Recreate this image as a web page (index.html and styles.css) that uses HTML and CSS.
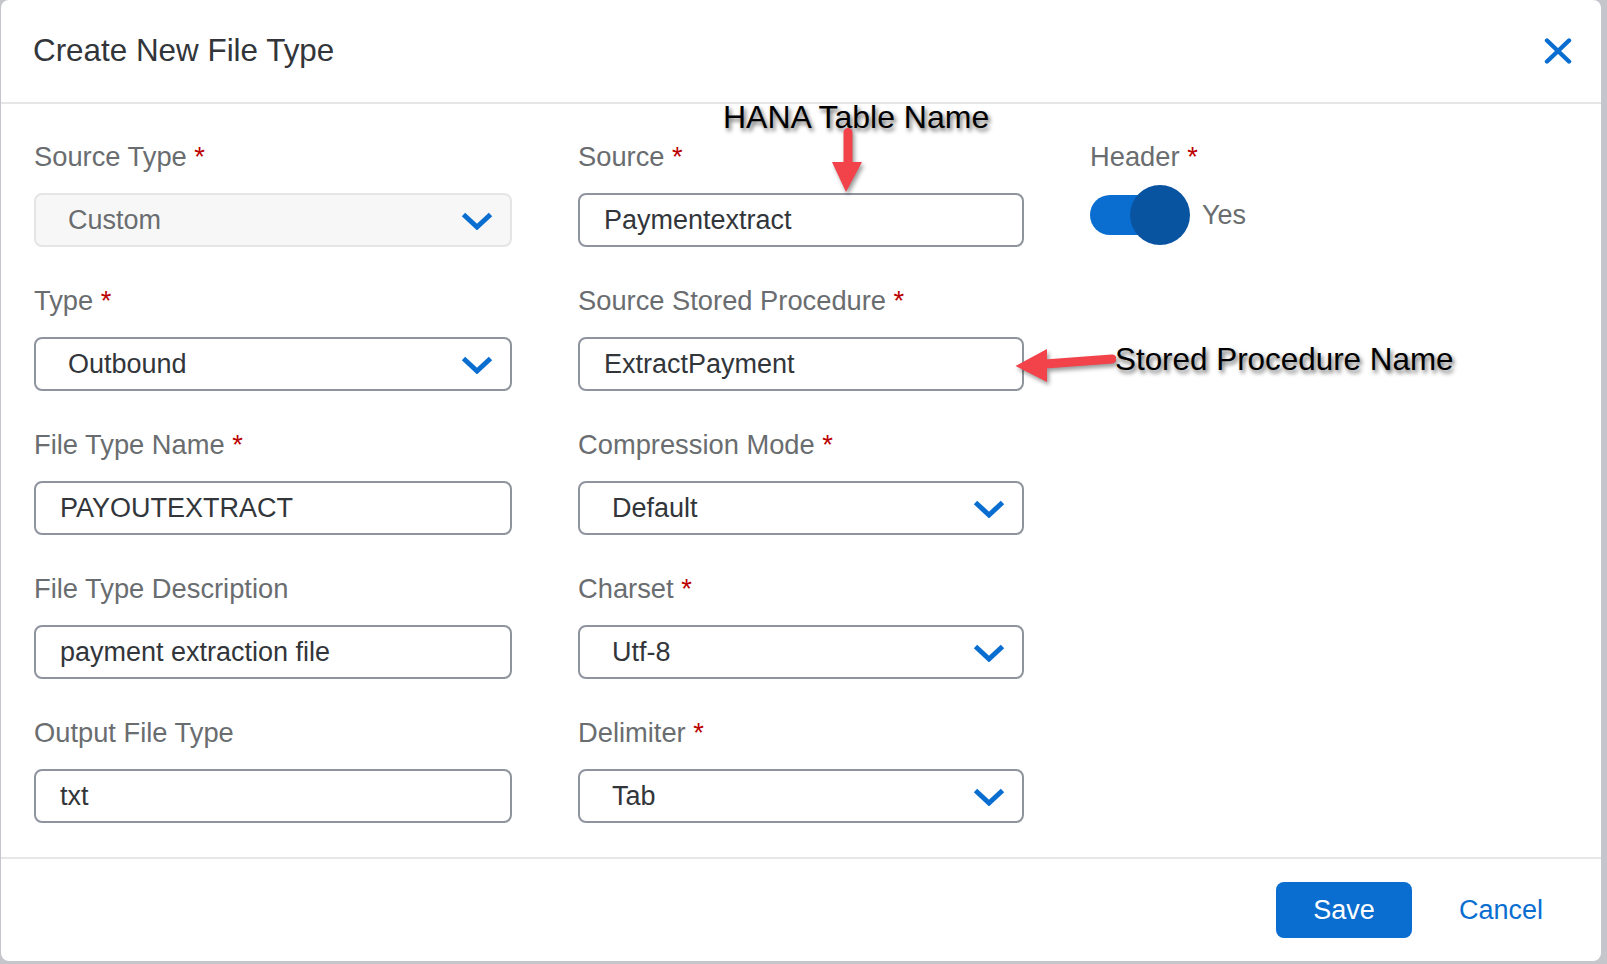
FILE: index.html
```html
<!DOCTYPE html>
<html lang="en">
<head>
<meta charset="utf-8">
<title>Create New File Type</title>
<link rel="stylesheet" href="styles.css">
</head>
<body>
<div class="dialog">
  <header class="dlg-header">
    <h1 class="title">Create New File Type</h1>
    <button class="close" aria-label="Close">
      <svg width="28" height="26" viewBox="0 0 28 26"><path d="M3 2.5 L25 23.5 M25 2.5 L3 23.5" stroke="#0a6ed1" stroke-width="4.4" stroke-linecap="round" fill="none"/></svg>
    </button>
  </header>

  <main class="dlg-body">
    <div class="form-grid">
      <div class="col">
        <div class="field">
          <div class="label">Source Type <span class="req">*</span></div>
          <div class="control select disabled"><span>Custom</span><svg class="chev" width="32" height="18" viewBox="0 0 32 18"><path d="M2.5 2.5 L16 15 L29.5 2.5" stroke="#0a6ed1" stroke-width="5" fill="none"/></svg></div>
        </div>
        <div class="field">
          <div class="label">Type <span class="req">*</span></div>
          <div class="control select"><span>Outbound</span><svg class="chev" width="32" height="18" viewBox="0 0 32 18"><path d="M2.5 2.5 L16 15 L29.5 2.5" stroke="#0a6ed1" stroke-width="5" fill="none"/></svg></div>
        </div>
        <div class="field">
          <div class="label">File Type Name <span class="req">*</span></div>
          <div class="control input">PAYOUTEXTRACT</div>
        </div>
        <div class="field">
          <div class="label">File Type Description</div>
          <div class="control input">payment extraction file</div>
        </div>
        <div class="field">
          <div class="label">Output File Type</div>
          <div class="control input">txt</div>
        </div>
      </div>

      <div class="col">
        <div class="field">
          <div class="label">Source <span class="req">*</span></div>
          <div class="control input">Paymentextract</div>
        </div>
        <div class="field">
          <div class="label">Source Stored Procedure <span class="req">*</span></div>
          <div class="control input">ExtractPayment</div>
        </div>
        <div class="field">
          <div class="label">Compression Mode <span class="req">*</span></div>
          <div class="control select"><span>Default</span><svg class="chev" width="32" height="18" viewBox="0 0 32 18"><path d="M2.5 2.5 L16 15 L29.5 2.5" stroke="#0a6ed1" stroke-width="5" fill="none"/></svg></div>
        </div>
        <div class="field">
          <div class="label">Charset <span class="req">*</span></div>
          <div class="control select"><span>Utf-8</span><svg class="chev" width="32" height="18" viewBox="0 0 32 18"><path d="M2.5 2.5 L16 15 L29.5 2.5" stroke="#0a6ed1" stroke-width="5" fill="none"/></svg></div>
        </div>
        <div class="field">
          <div class="label">Delimiter <span class="req">*</span></div>
          <div class="control select"><span>Tab</span><svg class="chev" width="32" height="18" viewBox="0 0 32 18"><path d="M2.5 2.5 L16 15 L29.5 2.5" stroke="#0a6ed1" stroke-width="5" fill="none"/></svg></div>
        </div>
      </div>

      <div class="col">
        <div class="field">
          <div class="label">Header <span class="req">*</span></div>
          <div class="toggle-row">
            <div class="switch"><span class="track"></span><span class="knob"></span></div>
            <span class="switch-text">Yes</span>
          </div>
        </div>
      </div>
    </div>
  </main>

  <footer class="dlg-footer">
    <button class="btn-save">Save</button>
    <button class="btn-cancel">Cancel</button>
  </footer>

  <div class="note note-hana">HANA Table Name</div>
  <svg class="arrow arrow-down" width="30" height="64" viewBox="0 0 30 64">
    <rect x="11.5" y="0" width="9" height="38" rx="4.5" fill="#f2424a"/>
    <polygon points="0,34 30,34 14,64" fill="#f2424a"/>
  </svg>
  <div class="note note-proc">Stored Procedure Name</div>
  <svg class="arrow arrow-left" width="101" height="37" viewBox="0 0 101 37">
    <path d="M30 17 L97 12" stroke="#f2424a" stroke-width="9" stroke-linecap="round" fill="none"/>
    <polygon points="0.5,19 32,2 32,35" fill="#f2424a"/>
  </svg>
</div>
</body>
</html>
```

FILE: styles.css
```css
* { box-sizing: border-box; }

html, body {
  margin: 0;
  padding: 0;
}

body {
  width: 1607px;
  height: 964px;
  overflow: hidden;
  background: #c4c6cb;
  font-family: "Liberation Sans", Arial, sans-serif;
  color: #32363a;
}

.dialog {
  position: relative;
  margin-left: 1px;
  width: 1600px;
  height: 961px;
  background: #ffffff;
  border-radius: 8px;
  display: flex;
  flex-direction: column;
}

.dlg-header {
  height: 104px;
  flex: none;
  display: flex;
  align-items: center;
  justify-content: space-between;
  padding: 0 29px 0 32px;
  border-bottom: 2px solid #e6e6e6;
}

.title {
  margin: 0;
  font-size: 31.4px;
  font-weight: 400;
  color: #32363a;
}

.close {
  border: 0;
  background: transparent;
  padding: 0;
  width: 28px;
  height: 26px;
  display: flex;
}

.dlg-body {
  flex: none;
  padding: 35px 0 34px 33px;
}

.form-grid {
  display: grid;
  grid-template-columns: 478px 446px 1fr;
  column-gap: 66px;
}

.col {
  display: flex;
  flex-direction: column;
  gap: 36px;
}

.field {
  display: flex;
  flex-direction: column;
  gap: 18px;
}

.label {
  font-size: 27.3px;
  line-height: 36px;
  color: #6a6d70;
}

.req {
  color: #bb0000;
}

.control {
  height: 54px;
  border: 2px solid #8d949c;
  border-radius: 8px;
  background: #fff;
  font-size: 27px;
  color: #32363a;
  display: flex;
  align-items: center;
  padding-top: 1px;
}

.input {
  padding-left: 24px;
}

.select {
  padding: 1px 17px 0 32px;
  justify-content: space-between;
}

.select.disabled {
  background: #f7f7f7;
  border-color: #e5e5e5;
  color: #6a6d70;
}

.chev {
  flex: none;
}

.toggle-row {
  height: 54px;
  display: flex;
  align-items: center;
  gap: 12px;
  margin-top: -5px;
}

.switch {
  position: relative;
  width: 100px;
  height: 60px;
  flex: none;
}

.track {
  position: absolute;
  left: 0;
  top: 10px;
  width: 80px;
  height: 40px;
  border-radius: 20px;
  background: #0a6ed1;
}

.knob {
  position: absolute;
  left: 40px;
  top: 0;
  width: 60px;
  height: 60px;
  border-radius: 50%;
  background: #0854a1;
}

.switch-text {
  font-size: 27px;
  color: #6a6d70;
}

.dlg-footer {
  flex: 1;
  border-top: 2px solid #e6e6e6;
  display: flex;
  align-items: center;
  justify-content: flex-end;
  gap: 47px;
  padding-right: 58px;
}

.btn-save {
  width: 136px;
  height: 56px;
  border: 0;
  border-radius: 8px;
  background: #0a6ed1;
  color: #fff;
  font-family: inherit;
  font-size: 27px;
  padding: 0;
}

.btn-cancel {
  border: 0;
  background: transparent;
  padding: 0;
  color: #0a6ed1;
  font-family: inherit;
  font-size: 27px;
}

.note {
  position: absolute;
  font-family: "Liberation Sans", Arial, sans-serif;
  line-height: 32px;
  color: #000;
  white-space: nowrap;
  text-shadow: 2px 3px 4px rgba(0, 0, 0, 0.6);
}

.note-hana {
  left: 722px;
  top: 101px;
  font-size: 32px;
}

.note-proc {
  left: 1114px;
  top: 344px;
  font-size: 31.4px;
}

.arrow {
  position: absolute;
  filter: drop-shadow(2px 3px 2px rgba(0, 0, 0, 0.4));
}

.arrow-down {
  left: 831px;
  top: 128px;
}

.arrow-left {
  left: 1014px;
  top: 347px;
}
```
